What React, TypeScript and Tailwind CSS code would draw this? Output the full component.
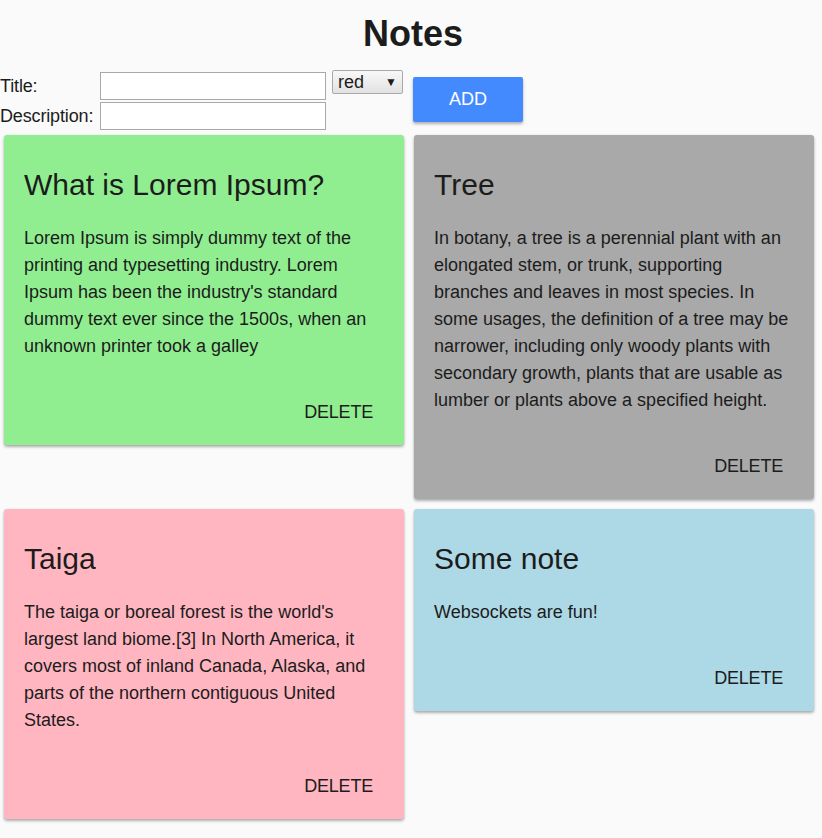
import React from "react";

type Note = { title: string; body: string; color: string };

const notes: Note[] = [
  {
    title: "What is Lorem Ipsum?",
    body: "Lorem Ipsum is simply dummy text of the printing and typesetting industry. Lorem Ipsum has been the industry's standard dummy text ever since the 1500s, when an unknown printer took a galley",
    color: "bg-[#90ee90]",
  },
  {
    title: "Tree",
    body: "In botany, a tree is a perennial plant with an elongated stem, or trunk, supporting branches and leaves in most species. In some usages, the definition of a tree may be narrower, including only woody plants with secondary growth, plants that are usable as lumber or plants above a specified height.",
    color: "bg-[#a9a9a9]",
  },
  {
    title: "Taiga",
    body: "The taiga or boreal forest is the world's largest land biome.[3] In North America, it covers most of inland Canada, Alaska, and parts of the northern contiguous United States.",
    color: "bg-[#ffb6c1]",
  },
  {
    title: "Some note",
    body: "Websockets are fun!",
    color: "bg-[#add8e6]",
  },
];

const NoteCard = ({ note }: { note: Note }) => (
  <div className={`${note.color} rounded-[3px] px-5 pt-8 pb-[15px] shadow-[0_2px_3px_rgba(0,0,0,0.3),0_0_2px_rgba(0,0,0,0.08)]`}>
    <h2 className="text-[30px] leading-[36px] font-normal">{note.title}</h2>
    <p className="mt-[22px] text-[18px] leading-[27px]">{note.body}</p>
    <div className="mt-[34px] flex justify-end">
      <button className="h-9 px-[11px] text-[18px] tracking-[-0.2px] uppercase">Delete</button>
    </div>
  </div>
);

export default function App() {
  return (
    <div className="min-h-[838px] bg-[#fafafa] text-[#1c1c1c] font-['Liberation_Sans',Arial,sans-serif]">
      <h1 className="pt-[13px] pl-1 text-center text-[36px] leading-[42px] font-bold">Notes</h1>
      <div className="mt-[15px] flex items-start">
        <div className="mt-[2px] grid grid-cols-[100px_226px] gap-y-[2px] items-center">
          <label className="text-[18px] leading-[24px] tracking-[-0.15px]">Title:</label>
          <input className="h-7 border border-[#a9a9a9] bg-white" />
          <label className="text-[18px] leading-[24px] tracking-[-0.15px]">Description:</label>
          <input className="h-7 border border-[#a9a9a9] bg-white" />
        </div>
        <div className="relative ml-[6px]">
          <select className="h-6 w-[71px] appearance-none rounded-[2px] border border-[#a9a9a9] bg-gradient-to-b from-[#f8f8f8] to-[#e2e2e2] pl-[5px] text-[18px] leading-[20px]">
            <option>red</option>
          </select>
          <span className="pointer-events-none absolute right-[6px] top-[4px] text-[12px] leading-[16px]">▼</span>
        </div>
        <button className="mt-[7px] ml-[10px] h-[45px] w-[110px] rounded-[2px] bg-[#448aff] text-[18px] text-white shadow-[0_2px_3px_rgba(0,0,0,0.3)]">
          ADD
        </button>
      </div>
      <div className="mt-[5px] grid grid-cols-[400px_400px] items-start gap-[10px] pl-1">
        {notes.map((n) => (
          <NoteCard key={n.title} note={n} />
        ))}
      </div>
    </div>
  );
}
